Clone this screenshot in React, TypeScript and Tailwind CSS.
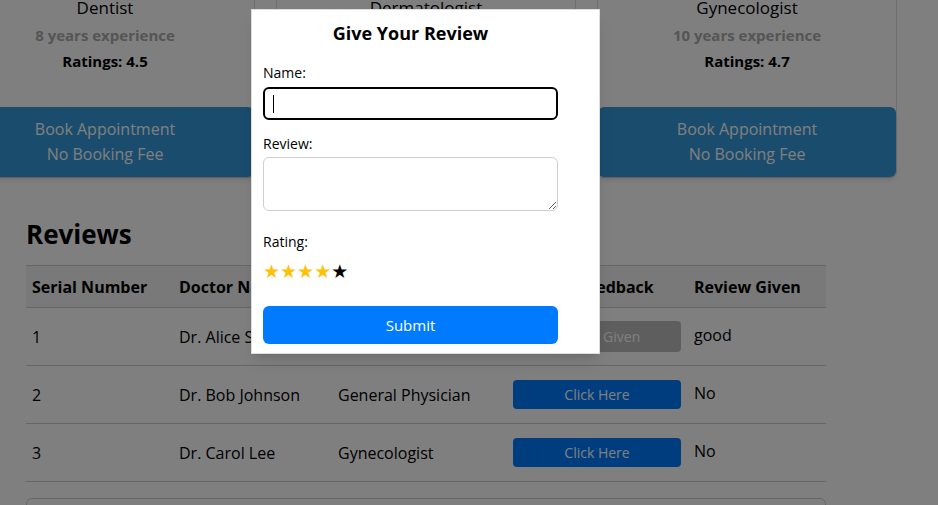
import React from 'react';

const doctors = [
  { specialty: 'Dentist', exp: '8 years experience', rating: '4.5' },
  { specialty: 'Dermatologist', exp: '5 years experience', rating: '4.2' },
  { specialty: 'Gynecologist', exp: '10 years experience', rating: '4.7' },
];

const reviews = [
  { id: 1, name: 'Dr. Alice Smith', specialty: 'Dentist', given: true, review: 'good' },
  { id: 2, name: 'Dr. Bob Johnson', specialty: 'General Physician', given: false, review: 'No' },
  { id: 3, name: 'Dr. Carol Lee', specialty: 'Gynecologist', given: false, review: 'No' },
];

function DoctorCard({ d }: { d: (typeof doctors)[number] }) {
  return (
    <div className="w-[300px] shrink-0 bg-white border border-[#dedede] rounded-md flex flex-col">
      <div className="text-center mt-[5px]">
        <p className="text-[17px] leading-[24px] text-black">{d.specialty}</p>
        <p className="mt-[4px] text-[15px] leading-[22px] font-bold text-[#aaaaaa]">{d.exp}</p>
        <p className="mt-[4px] text-[15px] leading-[22px] font-bold text-black">Ratings: {d.rating}</p>
      </div>
      <button className="mt-[35px] h-[70px] w-full rounded-md bg-[#3498db] text-white text-[16px] leading-[25px] shadow-md">
        Book Appointment<br />No Booking Fee
      </button>
    </div>
  );
}

export default function App() {
  return (
    <div className="relative w-[938px] h-[505px] overflow-hidden bg-white text-black" style={{ fontFamily: '"Open Sans", "Liberation Sans", sans-serif' }}>
      {/* page behind the dialog */}
      <div className="flex gap-[21px] -ml-[45px] -mt-[10px]">
        {doctors.map((d) => <DoctorCard key={d.specialty} d={d} />)}
      </div>

      <div className="px-[26px]">
        <h2 className="mt-[37px] text-[26px] leading-[39px] font-bold">Reviews</h2>
        <table className="mt-[11px] w-[800px] border-collapse text-left text-[16px]">
          <thead>
            <tr className="bg-[#f2f2f2] border-y border-[#cccccc] h-[42px] font-bold">
              <th className="w-[147px] pl-[6px]">Serial Number</th>
              <th className="w-[159px] pl-[6px]">Doctor Name</th>
              <th className="w-[175px] pl-[6px]">Speciality</th>
              <th className="w-[181px] pl-[6px]">Provide Feedback</th>
              <th className="pl-[6px]">Review Given</th>
            </tr>
          </thead>
          <tbody>
            {reviews.map((r) => (
              <tr key={r.id} className="border-b border-[#cccccc] h-[58px]">
                <td className="pl-[6px]">{r.id}</td>
                <td className="pl-[6px]">{r.name}</td>
                <td className="pl-[6px]">{r.specialty}</td>
                <td className="pl-[6px]">
                  {r.given ? (
                    <button className="w-[168px] h-[31px] rounded bg-[#bdbdbd] text-white text-[14px]">Review Given</button>
                  ) : (
                    <button className="w-[168px] h-[29px] rounded bg-[#007bff] text-white text-[14px]">Click Here</button>
                  )}
                </td>
                <td className="pl-[6px] pb-[4px]">{r.review}</td>
              </tr>
            ))}
          </tbody>
        </table>
        <div className="mt-[16px] w-[800px] h-[60px] border border-[#cccccc] rounded-md"></div>
      </div>

      {/* overlay */}
      <div className="absolute inset-0 bg-black/50"></div>

      {/* dialog */}
      <div className="absolute left-[251px] top-[9px] w-[349px] bg-white border border-[#dddddd] shadow-lg pl-[11px] pt-[10px] pb-[9px]">
        <div className="w-[295px] flex flex-col">
          <h3 className="text-center text-[18px] leading-[27px] font-bold">Give Your Review</h3>
          <label className="mt-[15px] text-[14px] leading-[21px]">Name:</label>
          <div className="mt-[4px] h-[33px] rounded-md border-2 border-black flex items-center pl-[8px]">
            <span className="w-px h-[18px] bg-black"></span>
          </div>
          <label className="mt-[13px] text-[14px] leading-[21px]">Review:</label>
          <textarea className="mt-[3px] block h-[54px] rounded-md border border-[#cfcfcf] outline-none"></textarea>
          <label className="mt-[20px] text-[14px] leading-[21px]">Rating:</label>
          <div className="mt-[9px] flex text-[19px] leading-[20px]" style={{ fontFamily: '"DejaVu Sans", sans-serif' }}>
            <span className="text-[#ffc107]">★</span>
            <span className="text-[#ffc107]">★</span>
            <span className="text-[#ffc107]">★</span>
            <span className="text-[#ffc107]">★</span>
            <span className="text-black">★</span>
          </div>
          <button className="mt-[25px] h-[38px] rounded-md bg-[#007bff] text-white text-[15px] font-medium">Submit</button>
        </div>
      </div>
    </div>
  );
}
